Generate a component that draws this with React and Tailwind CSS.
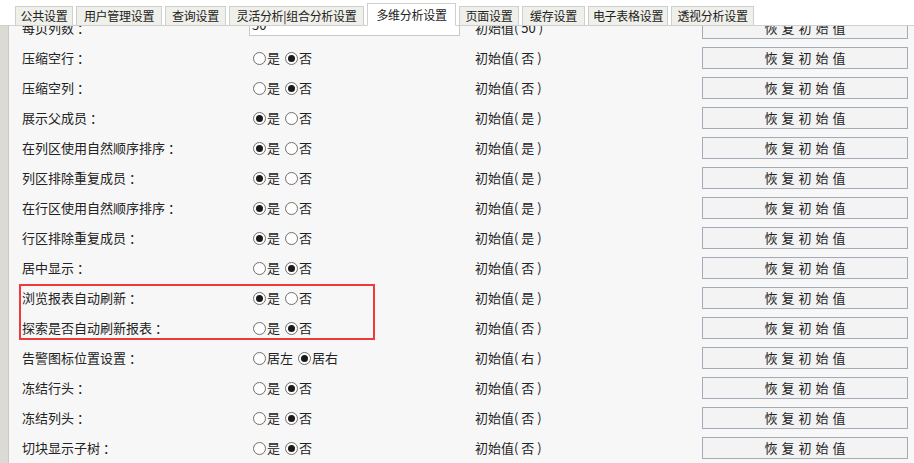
import React from 'react';

const tabs = [
  { name: '公共设置', w: 'w-[58px]' },
  { name: '用户管理设置', w: 'w-[86px]' },
  { name: '查询设置', w: 'w-[61px]' },
  { name: '灵活分析|组合分析设置', w: 'w-[135px]' },
  { name: '多维分析设置', w: 'w-[89px]', active: true },
  { name: '页面设置', w: 'w-[60px]' },
  { name: '缓存设置', w: 'w-[63px]' },
  { name: '电子表格设置', w: 'w-[80px]' },
  { name: '透视分析设置', w: 'w-[83px]' },
];

const rows = [
  { label: '压缩空行', value: 1, init: '否' },
  { label: '压缩空列', value: 1, init: '否' },
  { label: '展示父成员', value: 0, init: '是' },
  { label: '在列区使用自然顺序排序', value: 0, init: '是' },
  { label: '列区排除重复成员', value: 0, init: '是' },
  { label: '在行区使用自然顺序排序', value: 0, init: '是' },
  { label: '行区排除重复成员', value: 0, init: '是' },
  { label: '居中显示', value: 1, init: '否' },
  { label: '浏览报表自动刷新', value: 0, init: '是' },
  { label: '探索是否自动刷新报表', value: 1, init: '否' },
  { label: '告警图标位置设置', value: 1, init: '右', options: ['居左', '居右'] },
  { label: '冻结行头', value: 1, init: '否' },
  { label: '冻结列头', value: 1, init: '否' },
  { label: '切块显示子树', value: 1, init: '否' },
];

function Radio({ checked }) {
  return (
    <span className="w-[13px] h-[13px] rounded-full border border-[#6f6f6f] bg-white flex items-center justify-center shrink-0">
      {checked && <span className="w-[7px] h-[7px] rounded-full bg-[#1a1a1a]" />}
    </span>
  );
}

function RestoreButton() {
  return (
    <button className="w-[206px] h-[22px] border border-[#a3abb7] bg-[#f3f3f3] text-[13px] text-[#222] tracking-[4px] pl-[4px] flex items-center justify-center">
      恢复初始值
    </button>
  );
}

function Label({ text }) {
  return (
    <span className="whitespace-nowrap">
      {text}
      <span className="ml-[3px]">：</span>
    </span>
  );
}

function Row({ row }) {
  const opts = row.options || ['是', '否'];
  return (
    <div className="h-[30px] grid grid-cols-[231px_222px_227px_206px] items-center">
      <Label text={row.label} />
      <div className="flex items-center">
        {opts.map((o, i) => (
          <label key={o} className={'flex items-center gap-[1px] ' + (i === 0 ? 'mr-[5px]' : '')}>
            <Radio checked={row.value === i} />
            <span>{o}</span>
          </label>
        ))}
      </div>
      <span>初始值( {row.init} )</span>
      <RestoreButton />
    </div>
  );
}

export default function App() {
  return (
    <div
      className="w-[914px] h-[463px] bg-white overflow-hidden flex flex-col text-[13px] text-[#222]"
      style={{ fontFamily: '"Noto Sans CJK SC", "Noto Sans", sans-serif' }}
    >
      {/* tab bar */}
      <div className="h-[25px] flex items-end pl-[15px] gap-[3px] shrink-0 text-[12px] tracking-[-0.3px]">
        {tabs.map((t) =>
          t.active ? (
            <div
              key={t.name}
              className={t.w + ' h-[23px] -mb-px z-10 bg-white border border-[#cfcfcf] border-b-white flex items-center justify-center leading-none whitespace-nowrap'}
            >
              {t.name}
            </div>
          ) : (
            <div
              key={t.name}
              className={t.w + ' h-[19px] bg-[#f0f0ea] border border-[#cfcfcf] border-b-0 flex items-center justify-center leading-none whitespace-nowrap'}
            >
              {t.name}
            </div>
          )
        )}
      </div>

      <div className="flex-1 flex border-t border-[#cfcfcf] min-h-0">
        <div className="w-[9px] bg-[#dcdad5] border-r border-[#c8c8c8] shrink-0" />
        <div className="flex-1 bg-[#f7f7f7] overflow-hidden pl-[13px]">
          <div className="relative -mt-[13px]">
            {/* partially scrolled first row */}
            <div className="h-[30px] grid grid-cols-[227px_226px_227px_206px] items-center">
              <Label text="每页列数" />
              <div className="h-[22px] -mt-[6px] w-[211px] bg-white border border-[#c8c8c8] pl-[2px] flex items-center">50</div>
              <span>初始值( 50 )</span>
              <RestoreButton />
            </div>
            {rows.map((r) => (
              <Row key={r.label} row={r} />
            ))}
            <div className="absolute left-[-3px] top-[271px] w-[356px] h-[56px] border-2 border-[#f03a3a] pointer-events-none" />
          </div>
        </div>
      </div>
    </div>
  );
}
